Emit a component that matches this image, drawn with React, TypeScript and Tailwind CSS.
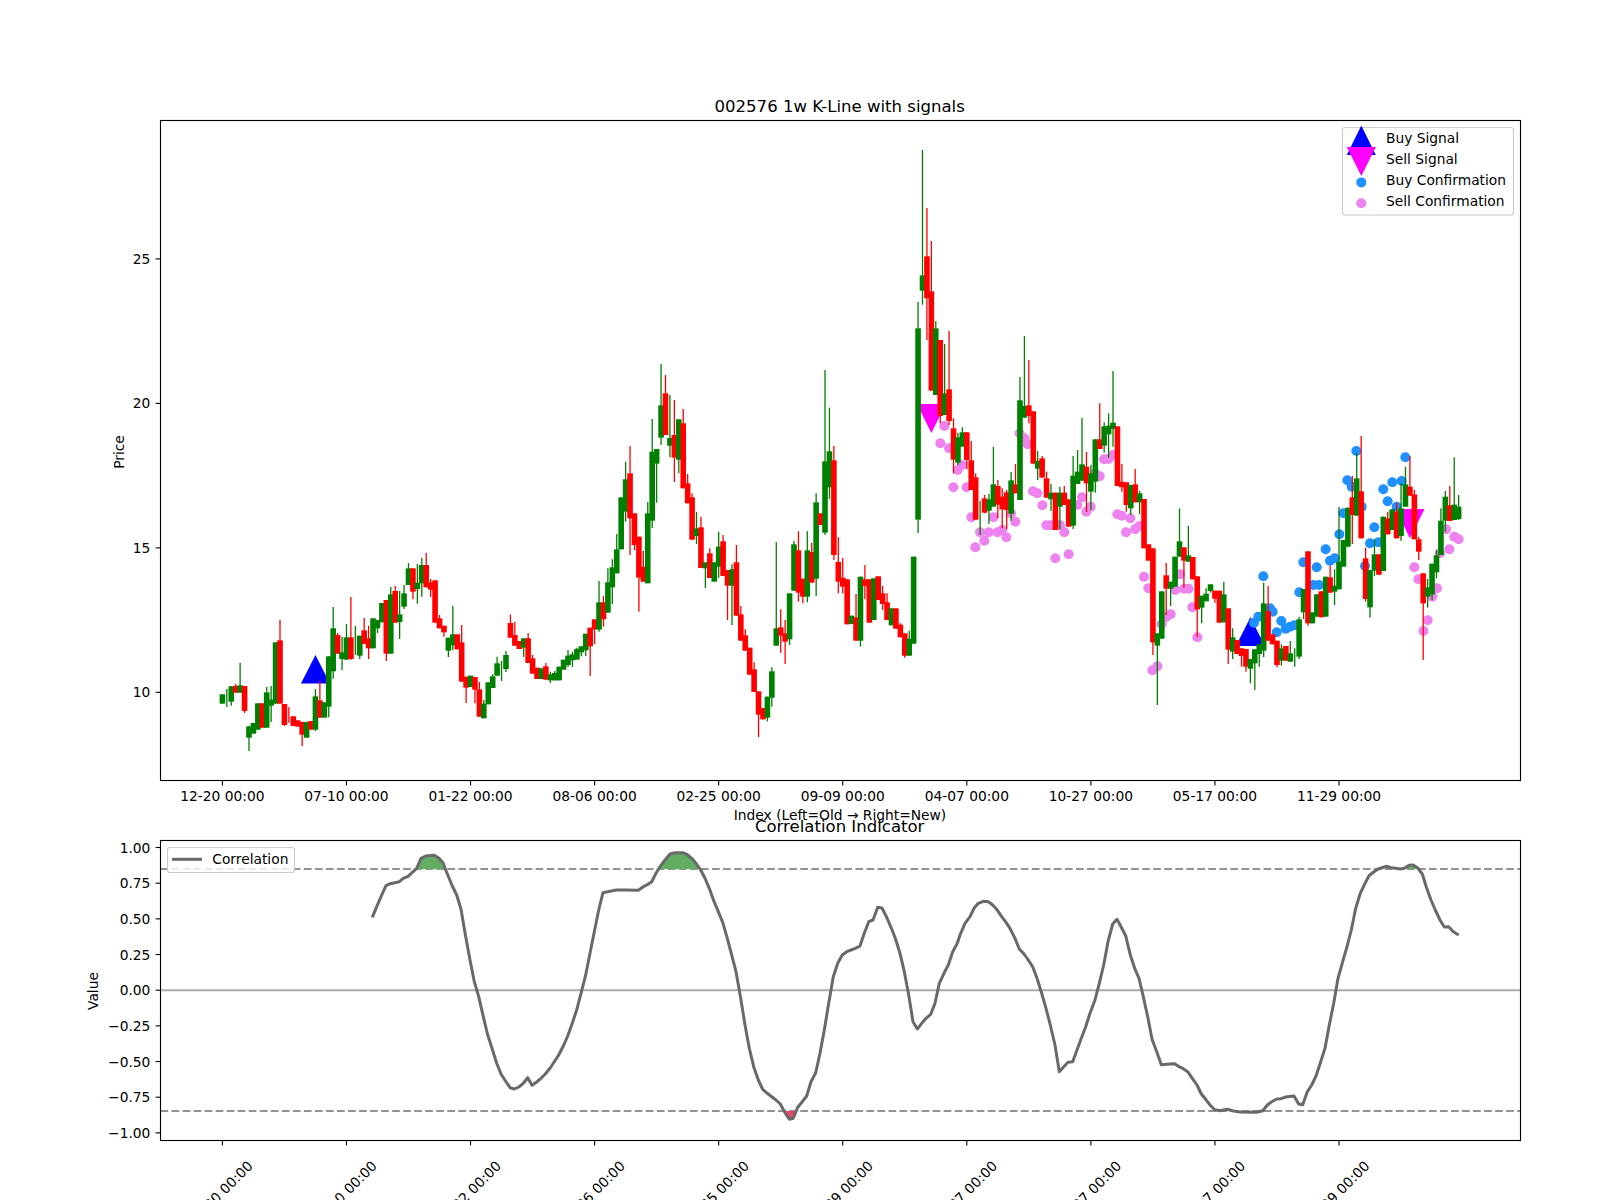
import React from "react";

type C = [number, number, number, number?, number?];

// candle tables: [green?, bodyTop, bodyBottom, wickTop, wickBottom], read at 3x from an origin row
const A: C[] = [
[1,463,491],[1,472,472,447,501],[1,439,485,439,497],[0,438,458,432,458],[1,436,458,368,458],[0,438,513,438,519],[1,559,593,559,633],[1,549,581],
[1,490,569],[0,490,563],[1,457,563,441,563],[1,479,497,438,546],[1,307,491],[0,301,491,240,491],[0,492,555,492,558],[0,520,520,501,548],
[0,529,558],[0,541,560],[0,546,584,545,618],[1,546,593],[0,543,569],[1,469,569,447,573],[0,481,533,423,533],[1,487,533,487,532],
[1,349,500,349,532],[1,265,394,201,416],[0,285,341,279,341],[1,337,357,290,390],[1,292,359,252,359],[0,292,357,171,359],[1,300,300,258,345],[1,287,347,287,357],
[0,271,312,234,312],[0,295,325,257,357],[1,235,325],[1,240,265,240,279],[1,189,247],[0,180,341,180,363],[1,163,341,141,341],[0,153,248,138,248],
[1,223,246,153,297],[1,160,200,135,207],[1,85,135,69,135],[0,85,155,85,178],[1,128,147,72,191],[1,75,130,53,170],[0,75,142,39,142],[0,127,149,117,171],
[0,121,248],[0,235,265,225,265],[0,257,277,257,290],[1,293,332,293,351],[1,283,316,197,330],[0,283,328],[0,307,425,255,425],[0,410,443,410,489],
[1,407,441],[0,411,449,411,490],[0,448,530,426,530],[1,491,535,480,535],[1,427,493],[1,409,444,403,444],[1,370,407,350,407],[1,385,385,363,423],
[1,345,387,333,396],[0,249,293,224,293],[0,285,317,245,317],[0,303,327],[1,295,323,295,351],[0,295,369,279,369],[0,355,401,345,401],[0,383,417],
[1,385,417],[0,379,419,369,419],[1,403,421,395,429],[1,399,421,393,421],[1,380,421],[1,359,389],[1,347,375,330,381],[1,343,361,335,381],
[1,327,359,323,349],[1,319,337,319,349],[1,281,331,281,349],[0,263,319,263,408],[0,238,268,238,312],[1,187,269,123,275],
];
const B: C[] = [
[0,757,808,738,830],[1,697,788,655,788],[1,652,712,628,762],[1,598,670,552,670],[1,442,598,442,598],[1,388,485,335,515],[0,370,505,288,615],[0,490,585,490,600],
[0,560,683,560,785],[0,650,695,603,695],[1,490,700,456,700],[1,305,512,207,535],[1,297,341,297,458],[1,166,263,42,285],[0,130,255,75,255],[1,264,287,135,322],
[0,255,323,150,396],[1,208,329,208,370],[0,220,415,177,415],[0,400,460,372,460],[0,442,569,430,569],[1,535,558,486,582],[0,532,654,500,654],[1,637,655,637,714],
[0,610,684,595,684],[1,637,695],[1,590,650,545,683],[0,574,678,555,678],[0,660,707,660,810],[1,658,707,643,825],[0,637,797,585,797],[0,793,872,768,872],
[0,856,902,838,902],[0,893,974],[0,958,1026,937,1026],[0,1024,1094,1024,1161],[0,1074,1108],[1,1040,1103,1040,1114],[1,964,1043,952,1070],[1,835,887,576,887],
[0,832,857,778,908],[0,850,875,810,942],[1,730,868,730,885],[1,583,722,573,722],[0,601,728,544,755],[0,686,740,686,760],[1,601,740,544,757],[0,606,698,578,698],
[1,457,686,430,738],[0,490,525,490,525],[1,334,548,60,555],[1,304,412,173,447],[0,331,615,288,630],[0,636,695,562,730],[0,683,710,624,730],[0,688,823],
[1,797,822],[0,802,872,732,872],[1,680,872,680,890],[0,688,708,645,748],[0,688,818],[1,685,810],[0,679,750],[0,730,762,708,780],[0,757,810,730,810],[1,775,826],
[0,775,836],[0,824,862,820,862],[0,850,917,850,923],[1,866,917,842,917],[1,620,881],
];
const D: C[] = [
[1,595,1169,516,1209],[1,436,482,60,524],[0,379,505,234,630],[0,484,782,333,782],[1,595,795,573,795],[0,630,858,630,880],[1,790,855,642,855],[0,778,873,603,885],
[0,895,989,865,1030],[1,922,998,908,1005],[1,907,950,892,950],[0,907,990,907,1018],[0,991,1080,933,1080],[0,1042,1169,1030,1169],[1,1160,1160,1113,1215],[0,1105,1148,1095,1150],
[1,1108,1142,1092,1182],[1,1063,1130,951,1130],[0,1068,1124,1050,1165],[0,1100,1138,1075,1195],[0,1087,1140,1080,1198],[1,1051,1151,1026,1172],[0,1063,1090,1002,1090],[1,811,1110,741,1110],
[1,828,863,618,863],[0,826,858,690,880],[0,844,1001],[1,992,1016,963,1050],[0,985,1043,978,1043],[0,1045,1103,1025,1103],[1,1088,1108,1062,1143],[0,1088,1200],
[1,1088,1130,1070,1198],[0,1088,1125,1068,1125],[0,1108,1190],[1,1037,1187,978,1197],[1,1025,1062,960,1062],[1,1003,1052,864,1052],[0,1010,1060,966,1146],[1,1030,1085,1005,1140],
[1,928,1055,928,1088],[0,928,957,820,957],[1,889,947,877,968],[1,887,913,850,983],[1,878,897,723,950],
];
const E: C[] = [
[0,79,258],[0,245,262,192,275],[0,247,315,247,335],[1,255,325,255,345],[0,253,307,207,307],[1,280,307,273,342],[0,297,445],[0,433,482],
[0,445,727,445,765],[1,700,737,700,915],[1,574,716],[0,526,566,489,645],[1,545,566,545,618],[1,470,560],[1,424,470,325,470],[0,442,482,442,563],
[1,466,485,378,485],[0,471,538,471,538],[0,529,628,529,712],[1,587,623,587,670],[1,581,604,565,604],[1,553,573,553,578],[0,572,596,572,608],[0,572,668],
[1,583,667,545,667],[0,625,749,625,792],[1,712,755,685,777],[0,720,762],[0,745,768,745,800],[0,747,800,747,815],[1,777,806,777,850],[1,748,790,748,870],
[1,733,762,733,800],[1,610,752,548,772],[0,634,722,558,722],[0,703,733],[0,722,795,722,802],[1,745,782,733,797],[0,738,782],[1,760,785,723,785],
[1,770,770,745,800],[1,658,770,650,777],[1,567,637,567,657],[0,454,670,454,677],[1,637,670],[1,583,650],[0,574,652],[1,530,650],
[0,532,578,497,578],[1,557,575,508,615],[1,485,568,321,568],[1,420,500],[1,323,440],[0,292,345,228,432],[1,235,347,158,347],[0,274,415,108,415],
[0,475,597,443,605],[1,510,622,510,653],[1,463,512,418,528],[0,463,524],[1,350,513],[0,355,403,335,403],[1,328,390],[0,335,415,308,415],
[1,325,408,250,422],[1,253,320,200,320],[0,260,287,168,287],[0,283,418,270,418],[0,418,455,410,480],[0,520,610,520,780],[1,562,590,537,623],[1,491,583,491,600],
[1,466,517,450,535],[1,362,465,325,465],[1,290,362,273,395],[0,316,363,258,363],[1,314,360,172,360],[1,320,357,285,360],
];

const candles = [
  ...A.map((c) => ({ c, y0: 540 })),
  ...B.map((c) => ({ c, y0: 350 })),
  ...D.map((c) => ({ c, y0: 130 })),
  ...E.map((c) => ({ c, y0: 400 })),
];

const cx = (i: number) => 222.4 + 4.431 * i;

const pinkZ3 = [[193,888],[181,940],[207,955],[233,1020],[246,1005],[220,1072],[260,1072],[274,1162],[300,1207],[313,1232],[326,1207],[352,1207],[366,1200],[379,1222],[286,1252],[340,1162],[393,1150],[406,1175],[419,910],[433,925],[443,943],[459,1084],[472,1090],[487,1126],[499,1186],[512,1186],[540,1186],[553,1207],[526,1285],[566,1273],[592,1125],[606,1102],[619,1145],[632,1130],[645,1030],[659,1039],[672,988],[685,987],[698,975],[712,1153],[725,1157],[751,1165],[738,1207],[765,1198],[778,1188]];
const pinkZ4 = [[132,530],[145,565],[157,811],[172,799],[185,673],[198,652],[212,643],[226,570],[240,523],[252,566],[265,566],[277,622],[292,712],[943,502],[955,538],[1011,565],[997,590],[983,661],[970,693],[1020,460],[1048,448],[1038,388],[1063,410],[1076,418]];
const blueZ4 = [[490,529],[510,625],[518,635],[462,668],[475,650],[530,697],[544,663],[557,686],[570,680],[583,676],[598,577],[610,487],[650,502],[640,555],[657,555],[677,448],[690,482],[704,475],[718,403],[730,340],[742,241],[755,260],[769,153],[785,320],[795,498],[810,430],[823,382],[835,427],[850,268],[863,304],[877,247],[890,320],[905,243],[916,172]];

const pink = [
  ...pinkZ3.map(([x, y]) => [880 + x / 3, 130 + y / 3]),
  ...pinkZ4.map(([x, y]) => [1100 + x / 3, 400 + y / 3]),
];
const blue = blueZ4.map(([x, y]) => [1100 + x / 3, 400 + y / 3]);

const at = (pts: number[][], x0: number, y0: number) => pts.map(([x, y]) => [x0 + x / 3, y0 + y / 3]);
const str = (pts: number[][]) => pts.map(([x, y]) => x.toFixed(1) + "," + y.toFixed(1)).join(" ");

const corr = [
  ...at([[697,412],[710,380],[724,348],[738,317],[751,311],[778,305],[790,295],[804,289],[830,265],[843,235],[857,228],[883,226],[897,235],[910,250],[917,270],[937,318],[950,345],[963,388],[977,470],[990,540],[1003,605],[1016,650],[1030,710],[1043,765],[1056,805],[1070,850],[1083,882],[1096,902],[1110,923],[1123,927],[1136,921],[1150,910],[1163,893],[1176,916],[1190,906],[1203,895],[1216,882],[1230,865],[1243,845],[1256,825],[1270,798],[1283,768],[1297,730],[1310,690],[1323,640],[1336,590],[1350,520],[1363,455],[1376,390],[1389,338],[1403,335],[1429,330],[1456,330]], 140, 780),
  ...at([[55,151],[70,140],[82,134],[95,125],[108,100],[120,80],[135,60],[150,42],[165,38],[188,38],[202,44],[215,55],[228,70],[242,90],[255,115],[268,145],[281,182],[295,215],[308,247],[322,295],[335,345],[348,395],[362,475],[375,555],[388,625],[401,680],[415,720],[428,748],[442,760],[455,770],[468,780],[481,792],[495,818],[508,838],[520,835],[533,802],[547,785],[560,768],[573,725],[587,698],[600,640],[613,570],[626,490],[640,410],[653,370],[667,345],[680,335],[693,330],[706,325],[720,318],[733,280],[746,245],[759,240],[773,202],[786,204],[800,232],[813,262],[826,295],[840,340],[853,395],[866,465],[879,545],[892,567],[905,550],[918,535],[932,523],[945,490],[958,430],[972,400],[985,375],[998,335],[1012,310]], 620, 840),
  ...at([[30,285],[45,250],[60,230],[72,205],[85,190],[100,184],[115,185],[128,195],[140,208],[155,230],[168,247],[180,265],[195,295],[208,327],[222,342],[235,360],[248,380],[261,415],[275,460],[288,505],[301,555],[315,615],[328,695],[341,680],[354,667],[368,665],[381,630],[394,595],[407,560],[420,520],[435,480],[448,430],[461,375],[474,305],[488,252],[501,238],[514,262],[527,287],[541,345],[554,385],[567,415],[580,470],[593,530],[606,597],[620,635],[634,674],[660,672],[674,671],[687,680],[700,686],[713,695],[727,715],[741,735],[754,762],[767,778],[780,795],[794,809]], 950, 840),
  ...at([[0,812],[22,808],[40,813],[60,816],[90,817],[110,817],[128,812],[142,795],[155,785],[170,777],[183,776],[197,771],[222,768],[236,792],[248,794],[262,755],[275,735],[288,708],[302,665],[315,625],[328,555],[341,490],[354,415],[368,365],[381,320],[394,270],[407,205],[421,160],[434,132],[447,107],[460,97],[474,87],[500,79],[513,83],[527,85],[541,87],[553,85],[567,76],[580,75],[593,84],[607,102],[620,145],[633,180],[646,210],[660,240],[673,261],[686,260],[700,275],[716,285]], 1220, 840),
];

const greenFill = [
  at([[830,267],[843,235],[857,228],[883,226],[897,235],[910,250],[915,267]], 140, 780),
  at([[118,87],[135,60],[150,42],[165,38],[188,38],[202,44],[215,55],[228,70],[238,87]], 620, 840),
  at([[553,87],[567,76],[580,75],[593,84],[596,87]], 1220, 840),
];
const redFill = [
  at([[495,813],[508,838],[520,835],[526,813]], 620, 840),
  at([[40,813],[60,816],[90,817],[110,817],[128,812]], 1220, 840),
];

const labels = ["12-20", "07-10", "01-22", "08-06", "02-25", "09-09", "04-07", "10-27", "05-17", "11-29"];
const tickX = labels.map((_, k) => 222.4 + 124.07 * k);
const priceTicks = [[10, 692.3], [15, 547.9], [20, 403.4], [25, 258.9]];
const valueTicks = ["1.00", "0.75", "0.50", "0.25", "0.00", "−0.25", "−0.50", "−0.75", "−1.00"].map((t, k) => [t, 990.2 - 142.7 * (1 - k * 0.25)] as const);

const up = (x: number, base: number, top: number) => x - 14.5 + "," + base + " " + (x + 14.5) + "," + base + " " + x + "," + top;

export default function App() {
  return (
    <div className="w-[1600px] h-[1200px] overflow-hidden bg-white">
      <svg
        viewBox="0 0 1600 1200"
        className="block w-[1600px] h-[1200px] font-['DejaVu_Sans',sans-serif] text-[13.8px]"
      >
        {/* price panel */}
        <polygon points={up(315.45, 683.5, 655)} fill="#0000ff" />
        <polygon points={up(1250.4, 646, 617.3)} fill="#0000ff" />
        <polygon points={up(931.4, 404, 433)} fill="#ff00ff" />
        <polygon points={up(1410, 509, 538.3)} fill="#ff00ff" />
        {pink.map(([x, y], i) => (
          <circle key={i} cx={x} cy={y} r={5} fill="#ee82ee" />
        ))}
        {blue.map(([x, y], i) => (
          <circle key={i} cx={x} cy={y} r={5} fill="#1e90ff" />
        ))}
        {candles.map(({ c, y0 }, i) => {
          const [g, t, b, wt, wb] = c;
          const col = g ? "#008000" : "#ff0000";
          const x = cx(i);
          return (
            <g key={i} fill={col} stroke={col}>
              <line x1={x} x2={x} y1={y0 + (wt ?? t) / 3} y2={y0 + (wb ?? b) / 3} strokeWidth={1.3} />
              {b > t && <rect x={x - 2.8} y={y0 + t / 3} width={5.6} height={(b - t) / 3} stroke="none" />}
            </g>
          );
        })}
        <rect x={160.5} y={120.5} width={1360} height={660} fill="none" stroke="#000" strokeWidth={1.11} />
        {tickX.map((x, k) => (
          <g key={k}>
            <line x1={x} x2={x} y1={780.5} y2={785.4} stroke="#000" strokeWidth={1.11} />
            <text x={x} y={801} textAnchor="middle">{labels[k] + " 00:00"}</text>
          </g>
        ))}
        {priceTicks.map(([v, y]) => (
          <g key={v}>
            <line x1={155.6} x2={160.5} y1={y} y2={y} stroke="#000" strokeWidth={1.11} />
            <text x={150.4} y={y + 5} textAnchor="end">{v}</text>
          </g>
        ))}
        <text x={124} y={452} textAnchor="middle" transform="rotate(-90 124 452)">Price</text>
        <text x={839.7} y={112} textAnchor="middle" className="text-[16.55px]">002576 1w K-Line with signals</text>
        <text x={840} y={820} textAnchor="middle">Index (Left=Old → Right=New)</text>

        {/* upper legend */}
        <rect x={1342.5} y={127.5} width={171} height={87.5} rx={2.8} fill="#fff" fillOpacity={0.8} stroke="#ccc" strokeWidth={1.11} />
        <polygon points={up(1361.3, 155, 125.5)} fill="#0000ff" />
        <polygon points={up(1361.3, 147, 176)} fill="#ff00ff" />
        <circle cx={1361.3} cy={182.4} r={5} fill="#1e90ff" />
        <circle cx={1361.3} cy={203.3} r={5} fill="#ee82ee" />
        <text x={1386} y={143}>Buy Signal</text>
        <text x={1386} y={164}>Sell Signal</text>
        <text x={1386} y={185}>Buy Confirmation</text>
        <text x={1386} y={206}>Sell Confirmation</text>

        {/* correlation panel */}
        <line x1={160.5} x2={1520.5} y1={990.2} y2={990.2} stroke="#aaaaaa" strokeWidth={2.08} />
        <line x1={160.5} x2={1520.5} y1={869} y2={869} stroke="#929292" strokeWidth={2.08} strokeDasharray="7.7 3.33" />
        <line x1={160.5} x2={1520.5} y1={1111} y2={1111} stroke="#929292" strokeWidth={2.08} strokeDasharray="7.7 3.33" />
        {greenFill.map((p, i) => (
          <polygon key={i} points={str(p)} fill="#62ad62" />
        ))}
        {redFill.map((p, i) => (
          <polygon key={i} points={str(p)} fill="#e8476a" />
        ))}
        <polyline points={str(corr)} fill="none" stroke="#696969" strokeWidth={3} strokeLinejoin="round" />
        <rect x={160.5} y={840.5} width={1360} height={300} fill="none" stroke="#000" strokeWidth={1.11} />
        {tickX.map((x, k) => (
          <g key={k}>
            <line x1={x} x2={x} y1={1140.5} y2={1145.4} stroke="#000" strokeWidth={1.11} />
            <text x={x - 2} y={1198} textAnchor="middle" transform={"rotate(-45 " + (x - 2) + " 1193)"}>{labels[k] + " 00:00"}</text>
          </g>
        ))}
        {valueTicks.map(([t, y]) => (
          <g key={t}>
            <line x1={155.6} x2={160.5} y1={y} y2={y} stroke="#000" strokeWidth={1.11} />
            <text x={150.4} y={y + 5} textAnchor="end">{t}</text>
          </g>
        ))}
        <text x={98} y={991} textAnchor="middle" transform="rotate(-90 98 991)">Value</text>
        <text x={839.7} y={832} textAnchor="middle" className="text-[16.55px]">Correlation Indicator</text>

        {/* lower legend */}
        <rect x={167.5} y={847.5} width={127} height={25} rx={2.8} fill="#fff" fillOpacity={0.8} stroke="#ccc" strokeWidth={1.11} />
        <line x1={172} x2={202} y1={859.3} y2={859.3} stroke="#696969" strokeWidth={3} />
        <text x={212.3} y={864}>Correlation</text>
      </svg>
    </div>
  );
}
